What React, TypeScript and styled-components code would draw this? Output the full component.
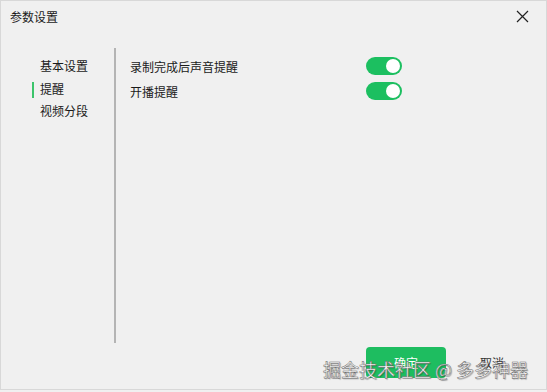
import React, { useState } from "react";
import styled, { createGlobalStyle } from "styled-components";

const Global = createGlobalStyle`
  html, body { margin: 0; padding: 0; background: #f0f0f0; }
  body { font-family: "Noto Sans CJK SC", "Noto Sans", sans-serif; }
  * { box-sizing: border-box; }
`;

const Window = styled.div`
  position: relative;
  width: 547px;
  height: 390px;
  background: #f0f0f0;
  border: 1px solid #d8d8d8;
  display: flex;
  flex-direction: column;
`;

const TitleBar = styled.div`
  height: 31px;
  display: flex;
  align-items: center;
  justify-content: space-between;
  padding: 0 17px 0 9px;
`;

const Title = styled.div`
  font-size: 12px;
  color: #1a1a1a;
`;

const CloseBtn = styled.div`
  width: 14px;
  height: 14px;
  display: flex;
  align-items: center;
  justify-content: center;
`;

const Body = styled.div`
  display: flex;
  padding-top: 16px;
  height: 311px;
`;

const Sidebar = styled.div`
  width: 115px;
  border-right: 2px solid #b4b4b4;
  padding-top: 7px;
  display: flex;
  flex-direction: column;
`;

const NavItem = styled.div<{ $active?: boolean }>`
  position: relative;
  height: 22.5px;
  line-height: 22.5px;
  padding-left: 39px;
  font-size: 12px;
  color: #1a1a1a;
  &::before {
    content: "";
    display: ${(p) => (p.$active ? "block" : "none")};
    position: absolute;
    left: 31px;
    top: 4px;
    width: 2px;
    height: 16px;
    background: #3cc46b;
  }
`;

const Content = styled.div`
  flex: 1;
  padding: 9px 0 0 14px;
  display: flex;
  flex-direction: column;
  gap: 7px;
`;

const Row = styled.div`
  display: flex;
  align-items: center;
  width: 272px;
  justify-content: space-between;
  height: 18px;
`;

const Label = styled.div`
  font-size: 12px;
  color: #1a1a1a;
`;

const Toggle = styled.div<{ $on: boolean }>`
  width: 36px;
  height: 18px;
  border-radius: 9px;
  background: ${(p) => (p.$on ? "#1cbf60" : "#c8c8c8")};
  position: relative;
  cursor: pointer;
  &::after {
    content: "";
    position: absolute;
    top: 2px;
    left: ${(p) => (p.$on ? "20px" : "2px")};
    width: 14px;
    height: 14px;
    border-radius: 50%;
    background: #fff;
  }
`;

const Footer = styled.div`
  display: flex;
  align-items: center;
  padding-left: 365px;
  padding-top: 4px;
  gap: 34px;
`;

const OkButton = styled.div`
  width: 80px;
  height: 31px;
  border-radius: 4px;
  background: #1ebd60;
  color: #fff;
  font-size: 12px;
  display: flex;
  align-items: center;
  justify-content: center;
`;

const CancelText = styled.div`
  font-size: 12px;
  color: #333;
`;

const Watermark = styled.div`
  position: absolute;
  left: 322px;
  top: 356px;
  font-size: 18px;
  line-height: 24px;
  color: #ffffff;
  -webkit-text-stroke: 0.5px #6a6a6a;
  text-shadow: 1px 1px 1px rgba(0,0,0,0.3);
  white-space: nowrap;
  pointer-events: none;
`;

export default function App() {
  const [a, setA] = useState(true);
  const [b, setB] = useState(true);
  return (
    <>
      <Global />
      <Window>
        <TitleBar>
          <Title>参数设置</Title>
          <CloseBtn>
            <svg width="13" height="13" viewBox="0 0 13 13">
              <path d="M1 1L12 12M12 1L1 12" stroke="#222" strokeWidth="1.2" />
            </svg>
          </CloseBtn>
        </TitleBar>
        <Body>
          <Sidebar>
            <NavItem>基本设置</NavItem>
            <NavItem $active>提醒</NavItem>
            <NavItem>视频分段</NavItem>
          </Sidebar>
          <Content>
            <Row>
              <Label>录制完成后声音提醒</Label>
              <Toggle $on={a} onClick={() => setA(!a)} />
            </Row>
            <Row>
              <Label>开播提醒</Label>
              <Toggle $on={b} onClick={() => setB(!b)} />
            </Row>
          </Content>
        </Body>
        <Footer>
          <OkButton>确定</OkButton>
          <CancelText>取消</CancelText>
        </Footer>
        <Watermark>掘金技术社区 @ 多多神器</Watermark>
      </Window>
    </>
  );
}
